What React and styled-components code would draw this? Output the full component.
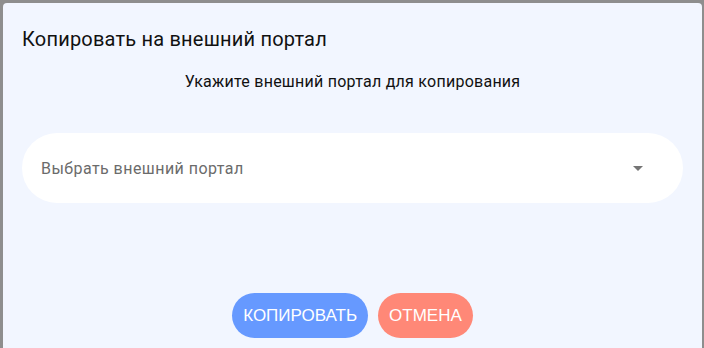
import React from 'react';
import styled, { createGlobalStyle } from 'styled-components';

const GlobalStyle = createGlobalStyle`
  html, body {
    margin: 0;
    padding: 0;
    background: #8e8e8e;
    overflow: hidden;
  }
  body {
    font-family: Roboto, "Noto Sans", sans-serif;
  }
`;

const Backdrop = styled.div`
  height: 348px;
  padding: 3px 2px 0 3px;
  box-sizing: border-box;
`;

const Dialog = styled.div`
  background: #f2f6ff;
  border-radius: 4px 4px 0 0;
  height: 360px;
  padding: 22px 19px 0 19px;
  box-sizing: border-box;
  display: flex;
  flex-direction: column;
`;

const Title = styled.h2`
  margin: 0;
  font-size: 20px;
  font-weight: 400;
  line-height: 28px;
  letter-spacing: 0.2px;
  color: #111;
`;

const Subtitle = styled.p`
  margin: 19px 0 0;
  text-align: center;
  font-size: 16px;
  line-height: 20px;
  letter-spacing: 0.25px;
  color: #111;
`;

const Select = styled.div`
  margin-top: 41px;
  height: 70px;
  border-radius: 35px;
  background: #fff;
  display: flex;
  align-items: center;
  justify-content: space-between;
  padding: 0 40px 0 19px;
`;

const Placeholder = styled.span`
  font-size: 16px;
  letter-spacing: 0.45px;
  color: #6b6b6b;
`;

const Arrow = styled.span`
  width: 0;
  height: 0;
  border-left: 5px solid transparent;
  border-right: 5px solid transparent;
  border-top: 5px solid #757575;
`;

const Actions = styled.div`
  margin-top: 90px;
  display: flex;
  justify-content: center;
  gap: 10px;
`;

const Button = styled.button`
  height: 45px;
  border: none;
  border-radius: 23px;
  padding: 0 11px;
  background: ${p => p.$color};
  color: #fff;
  font-family: "Liberation Sans", Arial, sans-serif;
  font-size: 17px;
  cursor: pointer;
`;

export default function App() {
  return (
    <>
      <GlobalStyle />
      <Backdrop>
        <Dialog>
          <Title>Копировать на внешний портал</Title>
          <Subtitle>Укажите внешний портал для копирования</Subtitle>
          <Select>
            <Placeholder>Выбрать внешний портал</Placeholder>
            <Arrow />
          </Select>
          <Actions>
            <Button $color="#6699ff">КОПИРОВАТЬ</Button>
            <Button $color="#ff8877">ОТМЕНА</Button>
          </Actions>
        </Dialog>
      </Backdrop>
    </>
  );
}
